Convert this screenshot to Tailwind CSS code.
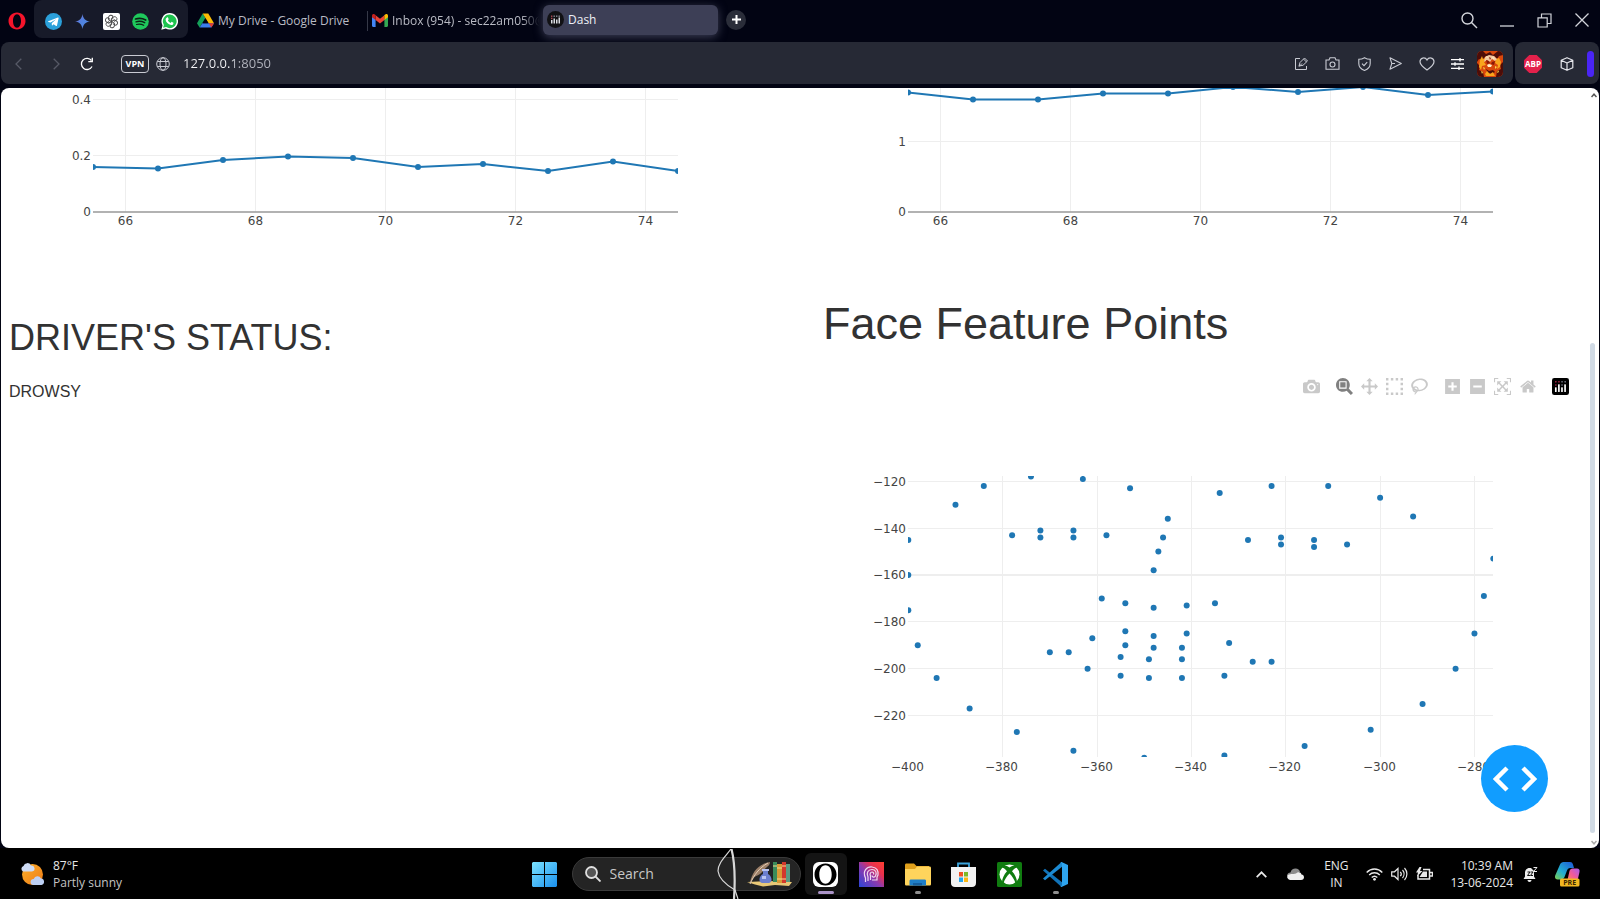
<!DOCTYPE html>
<html lang="en">
<head>
<meta charset="utf-8">
<meta name="viewport" content="width=device-width, initial-scale=1">
<title>Dash</title>
<script src="https://cdn.jsdelivr.net/npm/@tailwindcss/browser@4"></script>
</head>
<body class="min-h-screen flex flex-col bg-[#020413] text-white font-['Open_Sans','Noto_Sans',sans-serif] text-xs overflow-x-hidden">

<!-- Tab strip -->
<header class="flex items-center h-[42px] text-[#b9bbc4]">
  <button aria-label="Opera menu" class="w-[34px] flex justify-center shrink-0">
    <svg width="18" height="18" viewBox="0 0 18 18"><path fill="#f5142b" fill-rule="evenodd" d="M9 .5C4 .5.5 4.300.5 9S4 17.500 9 17.500 17.500 13.700 17.500 9 14 .5 9 .5zM9 2.300c2.500 0 4 3 4 6.700S11.500 15.700 9 15.700 5 12.700 5 9 6.500 2.300 9 2.300z"/></svg>
  </button>
  <nav aria-label="Pinned tabs" class="flex items-center justify-center gap-3 w-[154px] h-[38px] mb-1 rounded-lg bg-[#171a29] shrink-0">
    <a href="#" aria-label="Telegram"><svg width="17" height="17" viewBox="0 0 17 17" class="mt-1"><circle cx="8.500" cy="8.500" r="8.500" fill="#2ba0da"/><path fill="#fff" d="M3.300 8.300l9.600-3.700c.5-.2.8.1.7.7L12 12.600c-.1.500-.5.6-.9.4L8.600 11.200l-1.300 1.200c-.2.200-.4.200-.4-.1l-.2-2.100 4.400-4-5.500 3.400-2.300-.7c-.4-.2-.4-.5 0-.6z"/></svg></a>
    <a href="#" aria-label="Gemini"><svg width="17" height="17" viewBox="0 0 17 17" class="mt-1"><defs><linearGradient id="gem" x1="0" y1="0" x2="1" y2="1"><stop offset="0" stop-color="#7a6fd0"/><stop offset=".5" stop-color="#4f83e0"/><stop offset="1" stop-color="#5c8fe0"/></linearGradient></defs><path fill="url(#gem)" d="M8.500 1c.8 4.800 2.700 6.700 7.500 7.500-4.800.8-6.700 2.700-7.500 7.500-.8-4.800-2.700-6.700-7.500-7.500 4.800-.8 6.700-2.700 7.500-7.500z"/></svg></a>
    <a href="#" aria-label="ChatGPT"><svg width="17" height="17" viewBox="0 0 17 17" class="mt-1"><rect width="17" height="17" rx="2" fill="#fff"/><g fill="none" stroke="#444" stroke-width=".9"><path id="gk" d="M8.500 8.500V5.200l2.600-1.500c1.800-.3 3.300 1.300 2.800 3.100L11 8.500"/><use href="#gk" transform="rotate(60 8.500 8.500)"/><use href="#gk" transform="rotate(120 8.500 8.500)"/><use href="#gk" transform="rotate(180 8.500 8.500)"/><use href="#gk" transform="rotate(240 8.500 8.500)"/><use href="#gk" transform="rotate(300 8.500 8.500)"/></g></svg></a>
    <a href="#" aria-label="Spotify"><svg width="17" height="17" viewBox="0 0 17 17" class="mt-1"><circle cx="8.500" cy="8.500" r="8.300" fill="#1fc95c"/><g fill="none" stroke="#0c2415" stroke-linecap="round"><path stroke-width="1.700" d="M3.500 6c3.500-1 7.200-.6 10.200 1"/><path stroke-width="1.400" d="M4 8.800c3-.9 6.100-.5 8.700.9"/><path stroke-width="1.200" d="M4.500 11.500c2.500-.7 5-.4 7.200.8"/></g></svg></a>
    <a href="#" aria-label="WhatsApp"><svg width="17" height="17" viewBox="0 0 17 17" class="mt-1"><path fill="#fff" d="M8.700 0a8.300 8.300 0 0 0-7.200 12.400L.3 16.800l4.500-1.200A8.300 8.300 0 1 0 8.700 0z"/><path fill="#1fc34f" d="M8.700 1.500a6.800 6.800 0 0 0-5.800 10.400l-.8 2.900 3-.8A6.800 6.800 0 1 0 8.700 1.500z"/><path fill="#fff" d="M6 4.400c.4-.3.900-.2 1 .2l.7 1.600-.8 1.200c.6 1.200 1.500 2 2.700 2.500l1-1.100 1.800.9c.3 1.500-1 2.500-2.300 2.300-3-.5-5.300-2.900-5.500-5.300 0-1 .6-1.700 1.400-2.300z"/></svg></a>
  </nav>
  <a href="#" class="flex items-center gap-1 w-[179px] pl-[9px] mb-px shrink-0">
    <svg width="17" height="15" viewBox="0 0 17 15" class="shrink-0"><path fill="#15a05a" d="M5.700.5L0 10.200l2.600 4.300L8.500 4.800z"/><path fill="#fbbc05" d="M5.700.5h5.600L17 10.200h-5.300z"/><path fill="#3b7ded" d="M5.300 10.200H17l-2.600 4.300H2.600z"/><path fill="#e33b2e" d="M14.400 14.500l-2.700-4.300H17z"/><path fill="#020413" d="M8.500 5.400l2.700 4.800H5.800z"/></svg>
    <span class="whitespace-nowrap">My Drive - Google Drive</span>
  </a>
  <a href="#" class="flex items-center gap-1 w-[176px] h-5 pl-1 mb-px border-l border-[#363948] overflow-hidden shrink-0 mask-r-from-88% mask-r-to-98%">
    <svg width="16" height="13" viewBox="0 0 16 13" class="shrink-0"><path fill="#4285f4" d="M0 2.500l3.600 2.700V13H1.200C.5 13 0 12.500 0 11.800z"/><path fill="#34a853" d="M16 2.500l-3.600 2.700V13h2.400c.7 0 1.200-.5 1.200-1.200z"/><path fill="#ea4335" d="M3.600 1.300L8 4.700l4.400-3.400V6L8 9.400 3.600 6z"/><path fill="#c5221f" d="M0 1.800C0 .2 1.700-.5 3 .600l.6.6V6L0 3.300z"/><path fill="#fbbc04" d="M16 1.800C16 .2 14.300-.5 13 .600l-.6.6V6L16 3.300z"/></svg>
    <span class="whitespace-nowrap">Inbox (954) - sec22am050@</span>
  </a>
  <a href="#" class="flex items-center gap-1 w-[175px] h-[30px] mb-[3px] pl-1 rounded-md bg-[#3d3f56] shadow-[0_2px_10px_#3d3f56] text-[#eef0f6] shrink-0">
    <svg width="17" height="17" viewBox="0 0 17 17"><circle cx="8.500" cy="8.500" r="8.500" fill="#111114"/><g fill="#d9dbe0"><rect x="4" y="9" width="1.500" height="3.500"/><rect x="6.500" y="7.500" width="1.500" height="5"/><rect x="9" y="8.500" width="1.500" height="4"/><rect x="11.500" y="6.500" width="1.500" height="6"/></g><g fill="#b04a55"><rect x="4" y="4.500" width="1.400" height="1.400"/><rect x="4" y="6.700" width="1.400" height="1.400"/></g><g fill="#8a8d98"><rect x="6.500" y="4.500" width="1.400" height="1.400"/><rect x="9" y="4.500" width="1.400" height="1.400"/><rect x="11.500" y="4.500" width="1.400" height="1.400"/></g></svg>
    <span>Dash</span>
  </a>
  <button aria-label="New tab" class="ml-2 mb-[3px] size-5 rounded-full bg-[#2a2d39] flex items-center justify-center shrink-0"><svg width="9" height="9" viewBox="0 0 9 9"><path d="M4.500 0v9M0 4.500h9" stroke="#fff" stroke-width="2"/></svg></button>
  <div class="flex items-center ml-auto mb-[2px] text-[#d3d5db]">
    <button aria-label="Search tabs" class="w-[38px] flex justify-center"><svg width="17" height="17" viewBox="0 0 17 17" fill="none" stroke="currentColor" stroke-width="1.400"><circle cx="6.500" cy="6.500" r="5.500"/><path d="M10.500 10.500l5.500 5.500"/></svg></button>
    <button aria-label="Minimize" class="w-[38px] flex justify-center"><svg width="14" height="14" viewBox="0 0 14 14"><path d="M0 13h14" stroke="currentColor" stroke-width="1.300"/></svg></button>
    <button aria-label="Restore" class="w-[37px] flex justify-center"><svg width="15" height="15" viewBox="0 0 15 15" fill="none" stroke="currentColor" stroke-width="1.200"><path d="M4.500 4.500v-3.500h9.500v9.500h-3.500M1 4.800h9.200V14H1z"/></svg></button>
    <button aria-label="Close" class="w-[37px] flex justify-center"><svg width="14" height="14" viewBox="0 0 14 14"><path d="M.5.5l13 13M13.500.5l-13 13" stroke="currentColor" stroke-width="1.300"/></svg></button>
  </div>
</header>

<!-- Address bar -->
<div class="flex gap-[2px] h-[42px] mx-px mb-1 text-[#c9cbd3]">
  <div class="flex flex-1 items-center rounded-lg bg-[#262935] pt-px pr-[10px]">
    <button aria-label="Back" class="w-[35px] flex justify-center text-[#565966]"><svg width="7" height="12" viewBox="0 0 7 12" fill="none" stroke="currentColor" stroke-width="1.300"><path d="M6.300.7L1 6l5.300 5.300"/></svg></button>
    <button aria-label="Forward" class="w-[41px] flex justify-center text-[#565966]"><svg width="7" height="12" viewBox="0 0 7 12" fill="none" stroke="currentColor" stroke-width="1.300"><path d="M.7.7L6 6 .7 11.300"/></svg></button>
    <button aria-label="Reload" class="w-5 flex justify-center text-white"><svg width="14" height="14" viewBox="0 0 14 14" fill="none" stroke="currentColor" stroke-width="1.300"><path d="M12 9.500A5.600 5.600 0 1 1 11.500 3.500"/><path d="M8.300 4.700h4V.8" /></svg></button>
    <button class="ml-6 w-7 h-[18px] rounded border border-[#c9cbd3] text-[9px] leading-4 font-bold text-white flex items-center justify-center">VPN</button>
    <svg width="14" height="14" viewBox="0 0 14 14" fill="none" stroke="currentColor" class="ml-[7px]"><circle cx="7" cy="7" r="6.300"/><ellipse cx="7" cy="7" rx="3" ry="6.300"/><path d="M1.300 4.500h11.400M1.300 9.500h11.400"/></svg>
    <input aria-label="Address" value="127.0.0.1:8050" class="ml-[13px] flex-1 outline-none text-[13px] text-transparent bg-[linear-gradient(90deg,#f4f5f8_51px,#b4b6c0_51px)] bg-clip-text caret-white">
    <div class="flex items-center">
      <button aria-label="Edit" class="w-[31px] flex justify-center"><svg width="15" height="14" viewBox="0 0 15 14" fill="none" stroke="currentColor"><path d="M6 1.500H1.500v11h11V9"/><path d="M5 9l1-3.500L10.500 1l3 3L9 8.300zM8 6.500L5 9.500M9.500 2l3 3"/></svg></button>
      <button aria-label="Snapshot" class="w-[31px] flex justify-center"><svg width="15" height="13" viewBox="0 0 15 13" fill="none" stroke="currentColor" stroke-width="1.100"><path d="M1 3h3l1-2.300h5L11 3h3v9.300H1z"/><circle cx="7.500" cy="7.500" r="2.500"/></svg></button>
      <button aria-label="Ad blocker" class="w-8 flex justify-center"><svg width="13" height="14" viewBox="0 0 13 14" fill="none" stroke="currentColor" stroke-width="1.100"><path d="M6.500.7c2 1.200 3.700 1.600 5.700 1.600v4.200c0 3.500-2.500 5.800-5.700 6.900C3.300 12.300.8 10 .8 6.500V2.300c2 0 3.700-.4 5.700-1.600z"/><path d="M4 6.700l2 2 3.200-3.500"/></svg></button>
      <button aria-label="Send" class="w-[31px] flex justify-center"><svg width="13" height="13" viewBox="0 0 13 13" fill="none" stroke="currentColor" stroke-width="1.100"><path d="M1 .8l11.300 5.700L1 12.200l1.800-5.700zM2.800 6.500H6" stroke-linejoin="round"/></svg></button>
      <button aria-label="Bookmark" class="w-[31px] flex justify-center"><svg width="16" height="14" viewBox="0 0 16 14" fill="none" stroke="currentColor" stroke-width="1.200"><path d="M8 13C4.500 10.500 1 8 1 4.700 1 .8 6-.5 8 3c2-3.500 7-2.200 7 1.700C15 8 11.500 10.500 8 13z"/></svg></button>
      <button aria-label="Easy setup" class="w-[31px] flex justify-center text-white"><svg width="13" height="12" viewBox="0 0 13 12" fill="none" stroke="currentColor" stroke-width="1.300"><path d="M0 1.700h13M0 6h13M0 10.300h13M9 0v3.500M4 4.200v3.600M8 8.500V12"/></svg></button>
      <button aria-label="Profile" class="ml-1"><svg width="26" height="26" viewBox="0 0 26 26"><defs><clipPath id="av"><rect width="26" height="26" rx="5"/></clipPath></defs><g clip-path="url(#av)"><rect width="26" height="26" fill="#d9480c"/><path fill="#4d0d08" d="M0 0h6l3 3 4-2 3 3 5-4h5v4l-4 1-2 3-3-3-4 2-4-2-4 4-3-1-2 3zM0 12l3 3-1 4 4 2 1 5H0zM26 11l-3 3 1 4-4 2-1 6h7zM9 18l3 2 4-1 2 2-3 2-4-1z"/><path fill="#f9a51d" d="M3 9l2-4 1 3 3-1-2 4 2 3-4 1-1 4-2-3zM22 7l-3 1-1 4 3 2-1 4 3-2 1-5zM8 23l2-3 3 3 3-2 2 4H9z"/><path fill="#f3c9a0" d="M8 6l4-2 5 1 3 3-2 2-3-2-2 3-3-2-3 2z"/><path fill="#fff1c8" d="M9 5l2 1-1 1zM15 6l3 1-2 1zM10 14l2-1 3 1-1 2h-3z"/><path fill="#8a1909" d="M9 9l3 1 1 2-3 1zM18 10l-3 1-1 2 3 1zM12 6l2 1-1 2z"/><path fill="#ffd84a" d="M4 20l2 1-1 2zM21 19l1 2-2 1zM6 16l2 1-1 2zM18 15l2 1-2 2z"/></g></svg></button>
    </div>
  </div>
  <div class="flex items-center w-[84px] rounded-lg bg-[#262935] pt-px pl-[9px]">
    <button aria-label="AdBlock Plus"><svg width="18" height="18" viewBox="0 0 18 18"><path fill="#e3214b" d="M5.300 0h7.400L18 5.300v7.400L12.700 18H5.300L0 12.700V5.300z"/><text x="9" y="12" text-anchor="middle" font-size="8" font-weight="bold" fill="#fff" font-family="Open Sans">ABP</text></svg></button>
    <button aria-label="Extensions" class="ml-[18px] text-[#e6e7ec]"><svg width="14" height="14" viewBox="0 0 14 14" fill="none" stroke="currentColor" stroke-width="1.200" stroke-linejoin="round"><path d="M7 .7l5.800 2.600v7.400L7 13.300 1.200 10.700V3.300zM1.200 3.300L7 6l5.800-2.700M7 6v7.300"/></svg></button>
    <div class="ml-[13px] w-[7px] h-[26px] rounded-full bg-[#4a25f5]"></div>
  </div>
</div>

<!-- Page -->
<main class="flex flex-1 mx-px rounded-lg bg-white overflow-hidden font-['Liberation_Sans',Arial,sans-serif] text-[#323232]">
  <div class="flex-1 grid grid-cols-2 gap-x-16 content-start pl-[8px] pr-4">
    <section aria-label="Eye ratio chart"><svg id="c1" viewBox="9 88 750 152" class="w-full h-auto block" font-family="Verdana,'DejaVu Sans',sans-serif" font-size="12" fill="#444"></svg></section>
    <section aria-label="Mouth ratio chart"><svg id="c2" viewBox="823 88 750 152" class="w-full h-auto block" font-family="Verdana,'DejaVu Sans',sans-serif" font-size="12" fill="#444"></svg></section>
    <section class="pt-19">
      <h2 class="text-[36px] leading-[44px]">DRIVER'S STATUS:</h2>
      <p class="mt-5 text-base leading-6">DROWSY</p>
    </section>
    <section class="pt-[57px] relative">
      <h1 class="text-[45px] leading-[54px]">Face Feature Points</h1>
      <div role="toolbar" aria-label="Chart tools" class="flex justify-end mt-[23px] h-[25px] text-[#c9c9c9]">
        <button aria-label="Download plot as a png" class="w-[25px] flex items-center justify-center"><svg width="17" height="17" viewBox="0 0 1000 1000" fill="currentColor"><path transform="matrix(1 0 0 -1 0 850)" d="m500 450c-83 0-150-67-150-150 0-83 67-150 150-150 83 0 150 67 150 150 0 83-67 150-150 150z m400 150h-120c-16 0-34 13-39 29l-31 93c-6 15-23 28-40 28h-340c-16 0-34-13-39-28l-31-94c-6-15-23-28-40-28h-120c-55 0-100-45-100-100v-450c0-55 45-100 100-100h800c55 0 100 45 100 100v450c0 55-45 100-100 100z m-400-550c-138 0-250 112-250 250 0 138 112 250 250 250 138 0 250-112 250-250 0-138-112-250-250-250z m365 380c-19 0-35 16-35 35 0 19 16 35 35 35 19 0 35-16 35-35 0-19-16-35-35-35z"/></svg></button>
        <button aria-label="Zoom" class="ml-2 w-[25px] flex items-center justify-center text-[#808080]"><svg width="17" height="17" viewBox="0 0 1000 1000" fill="currentColor"><path transform="matrix(1 0 0 -1 0 850)" d="m1000-25l-250 251c40 63 63 138 63 218 0 224-182 406-407 406-224 0-406-182-406-406s183-406 407-406c80 0 155 22 218 62l250-250 125 125z m-812 250l0 438 437 0 0-438-437 0z m62 375l313 0 0-312-313 0 0 312z"/></svg></button>
        <button aria-label="Pan" class="w-[25px] flex items-center justify-center"><svg width="17" height="17" viewBox="0 0 1000 1000" fill="currentColor"><path transform="matrix(1 0 0 -1 0 850)" d="m1000 350l-187 188 0-125-250 0 0 250 125 0-188 187-187-187 125 0 0-250-250 0 0 125-188-188 186-187 0 125 252 0 0-250-125 0 187-188 188 188-125 0 0 250 250 0 0-126 187 188z"/></svg></button>
        <button aria-label="Box Select" class="w-[25px] flex items-center justify-center"><svg width="17" height="17" viewBox="0 0 1000 1000" fill="currentColor"><path transform="matrix(1 0 0 -1 0 850)" d="m0 850l0-143 143 0 0 143-143 0z m286 0l0-143 143 0 0 143-143 0z m285 0l0-143 143 0 0 143-143 0z m286 0l0-143 143 0 0 143-143 0z m-857-286l0-143 143 0 0 143-143 0z m857 0l0-143 143 0 0 143-143 0z m-857-285l0-143 143 0 0 143-143 0z m857 0l0-143 143 0 0 143-143 0z m-857-286l0-143 143 0 0 143-143 0z m286 0l0-143 143 0 0 143-143 0z m285 0l0-143 143 0 0 143-143 0z m286 0l0-143 143 0 0 143-143 0z"/></svg></button>
        <button aria-label="Lasso Select" class="w-[25px] flex items-center justify-center"><svg width="17" height="17" viewBox="0 0 1031 1000" fill="currentColor"><path transform="matrix(1 0 0 -1 0 850)" d="m1018 538c-36 207-290 336-568 286-277-48-473-256-436-463 10-57 36-108 76-151-13-66 11-137 68-183 34-28 75-41 114-42l-55-70 0 0c-2-1-3-2-4-3-10-14-8-34 5-45 14-11 34-8 45 4 1 1 2 3 2 5l0 0 113 140c16 11 31 24 45 40 4 3 6 7 8 11 48-3 100 0 151 9 278 48 473 255 436 462z m-624-379c-80 14-149 48-197 96 42 42 109 47 156 9 33-26 47-66 41-105z m-187-74c-19 16-33 37-39 60 50-32 109-55 174-68-42-25-95-24-135 8z m360 75c-34-7-69-9-102-8 8 62-16 128-68 170-73 59-175 54-244-5-9 20-16 40-20 61-28 159 121 317 333 354s407-60 434-217c28-159-121-318-333-355z"/></svg></button>
        <button aria-label="Zoom in" class="ml-2 w-[25px] flex items-center justify-center"><svg width="15" height="17" viewBox="0 0 875 1000" fill="currentColor"><path transform="matrix(1 0 0 -1 0 850)" d="m1 787l0-875 875 0 0 875-875 0z m687-500l-187 0 0-187-125 0 0 187-188 0 0 125 188 0 0 187 125 0 0-187 187 0 0-125z"/></svg></button>
        <button aria-label="Zoom out" class="w-[25px] flex items-center justify-center"><svg width="15" height="17" viewBox="0 0 875 1000" fill="currentColor"><path transform="matrix(1 0 0 -1 0 850)" d="m0 788l0-876 875 0 0 876-875 0z m688-500l-500 0 0 125 500 0 0-125z"/></svg></button>
        <button aria-label="Autoscale" class="w-[25px] flex items-center justify-center"><svg width="17" height="17" viewBox="0 0 1000 1000" fill="currentColor"><path transform="matrix(1 0 0 -1 0 850)" d="m250 850l-187 0-63 0 0-62 0-188 63 0 0 188 187 0 0 62z m688 0l-188 0 0-62 188 0 0-188 62 0 0 188 0 62-62 0z m-875-938l0 188-63 0 0-188 0-62 63 0 187 0 0 62-187 0z m875 188l0-188-188 0 0-62 188 0 62 0 0 62 0 188-62 0z m-125 188l-1 0-93-94-156 156 156 156 92-93 2 0 0 250-250 0 0-2 93-92-156-156-156 156 94 92 0 2-250 0 0-250 0 0 93 93 157-156-157-156-93 94 0 0 0-250 250 0 0 0-94 93 156 157 156-157-93-93 0 0 250 0 0 250z"/></svg></button>
        <button aria-label="Reset axes" class="w-[25px] flex items-center justify-center"><svg width="16" height="17" viewBox="0 0 929 1000" fill="currentColor"><path transform="matrix(1 0 0 -1 0 850)" d="m786 296v-267q0-15-11-26t-25-10h-214v214h-143v-214h-214q-15 0-25 10t-11 26v267q0 1 0 2t0 2l321 264 321-264q1-1 1-4z m124 39l-34-41q-5-5-12-6h-2q-7 0-12 3l-386 322-386-322q-7-4-13-4-7 2-12 7l-35 41q-4 5-3 13t6 12l401 334q18 15 42 15t43-15l136-114v109q0 8 5 13t13 5h107q8 0 13-5t5-13v-227l122-102q5-5 6-12t-4-13z"/></svg></button>
        <a href="#" aria-label="Produced with Plotly" class="ml-2 w-[25px] flex items-center justify-center"><svg width="17" height="17" viewBox="0 0 132 132"><rect width="132" height="132" rx="18"/><g fill="#c52b54"><circle cx="30" cy="30" r="6"/><circle cx="54" cy="30" r="6"/><circle cx="30" cy="54" r="6"/></g><g fill="#8b8fa0"><circle cx="78" cy="30" r="6"/><circle cx="102" cy="30" r="6"/><circle cx="78" cy="54" r="6"/></g><g fill="#fff"><rect x="23" y="72" width="13" height="36" rx="4"/><rect x="47" y="48" width="13" height="60" rx="4"/><rect x="71" y="72" width="13" height="36" rx="4"/><rect x="95" y="48" width="13" height="60" rx="4"/></g></svg></a>
      </div>
      <svg id="c3" viewBox="823 399 750 400" class="w-full h-auto block" font-family="Verdana,'DejaVu Sans',sans-serif" font-size="12" fill="#444"></svg>
      <button aria-label="Dash developer tools" class="absolute right-[25px] bottom-[-13px] size-[67px] rounded-full bg-[#119dff] flex items-center justify-center"><svg width="44" height="26" viewBox="0 0 44 26" fill="none" stroke="#fff" stroke-width="4.500"><path d="M14 2L3 13l11 11M30 2l11 11-11 11"/></svg></button>
    </section>
  </div>
  <div aria-hidden="true" class="w-[10px] flex flex-col items-center text-[#555]">
    <svg width="6" height="5" viewBox="0 0 6 5" class="mt-[5px]" fill="none" stroke="currentColor" stroke-width="1.500"><path d="M.5 4L3 1.200 5.500 4"/></svg>
    <div class="mt-auto w-[5px] h-[490px] mr-1 rounded-full bg-[#d0dae5]"></div>
    <svg width="6" height="5" viewBox="0 0 6 5" class="mt-[7px] mb-[3px]" fill="none" stroke="#aaa" stroke-width="1.500"><path d="M.5 1L3 3.800 5.500 1"/></svg>
  </div>
</main>

<!-- Taskbar -->
<footer class="relative grid grid-cols-[1fr_auto_1fr] items-center h-[51px] pt-px bg-black text-[#e8e8e8]">
  <a href="#" class="flex items-center pl-5 gap-2">
    <svg width="25" height="24" viewBox="0 0 25 24"><defs><linearGradient id="sun" x1="0" y1="0" x2="1" y2="1"><stop offset="0" stop-color="#fbb02c"/><stop offset="1" stop-color="#ee7a15"/></linearGradient></defs><circle cx="12.500" cy="12.500" r="10.500" fill="url(#sun)"/><path fill="#cfdcf5" d="M3 9.500a3 3 0 0 1 .5-5.500A4 4 0 0 1 11 3.500a3 3 0 0 1 1 6z"/><path fill="#bdd0f4" d="M13.500 23a3 3 0 0 1 .2-6 4 4 0 0 1 7.300-.500 3.300 3.300 0 0 1 .5 6.500z"/></svg>
    <span class="flex flex-col leading-[17px]"><span>87°F</span><span class="text-[#c4c4c4]">Partly sunny</span></span>
  </a>
  <div class="flex items-center">
    <button aria-label="Start" class="w-[42px] flex justify-center"><svg width="25" height="25" viewBox="0 0 25 25"><defs><linearGradient id="win" x1="0" y1="0" x2="1" y2="1"><stop offset="0" stop-color="#7be3ff"/><stop offset="1" stop-color="#1a90ee"/></linearGradient></defs><path fill="url(#win)" d="M1 0h11v12H0V1zM13 0h11l1 1v11H13zM0 13h12v12H1l-1-1zM13 13h12v11l-1 1H13z"/></svg></button>
    <label class="ml-[6px] flex items-center w-[229px] h-[34px] rounded-full border border-[#3a3a3a] bg-[#242424] pl-3 pr-[6px]">
      <svg width="16" height="16" viewBox="0 0 16 16" fill="#555" stroke="#e0e0e0" stroke-width="1.800"><circle cx="6.500" cy="6.500" r="5.500"/><path d="M10.500 10.500l5 5"/></svg>
      <input type="search" aria-label="Search" placeholder="Search" class="ml-[9px] w-20 flex-1 outline-none text-sm placeholder:text-[#c8c8c8]">
      <svg width="48" height="26" viewBox="0 0 48 26"><path fill="#e9c877" d="M1 21l22-1 23 1-3 4-14-1-12 1.500-8-2z"/><path fill="#9c7f68" d="M4 22C6 11 12 3 24 1c0 4-4 5-5 7-3 4-6 6-9 7-3 2-4 4-5 7z"/><path d="M4 23C8 14 13 7 22 2" stroke="#e3cdb5" stroke-width="1" fill="none"/><path fill="#6c7fd0" d="M17 9h5v4c4 2 5 8 1 9h-7c-4-1-3-7 1-9z"/><path fill="#b9c4f2" d="M16 8h7v2h-7zM16 15h4v3h-4z"/><rect x="27" y="1" width="4" height="20" fill="#3b8c5a"/><rect x="31" y="3" width="5" height="19" fill="#d99a35"/><rect x="36" y="1" width="4" height="21" fill="#d3392c"/><rect x="40" y="3" width="4" height="18" fill="#5a9c82"/><path stroke="#f3dc94" d="M31 7h5M31 18h5M36 5h4M36 18h4M27 5h4"/></svg>
    </label>
    <button aria-label="Opera" class="ml-1 w-[42px] h-[42px] rounded-md bg-[#141414] flex flex-col items-center justify-end gap-1 pb-px"><svg width="25" height="25" viewBox="0 0 25 25"><rect width="25" height="25" rx="6" fill="#fff"/><path fill-rule="evenodd" d="M12.500 1.500C6 1.500 1.500 6.500 1.500 12.500s4.500 11 11 11 11-5 11-11-4.500-11-11-11zm0 1.800c4 0 6.200 4.200 6.200 9.200s-2.200 9.200-6.200 9.200-6.200-4.200-6.200-9.200 2.200-9.200 6.200-9.200z"/></svg><span class="w-4 h-[3px] rounded-full bg-[#ab94c8]"></span></button>
    <button aria-label="Assistant" class="ml-1 w-[42px] h-[42px] flex flex-col items-center justify-end pb-2"><svg width="25" height="25" viewBox="0 0 25 25"><defs><linearGradient id="ast" x1="0" y1="1" x2="1" y2="0"><stop offset="0" stop-color="#2a45d8"/><stop offset=".45" stop-color="#8b3aae"/><stop offset=".7" stop-color="#e8304f"/><stop offset="1" stop-color="#ff4030"/></linearGradient></defs><rect width="25" height="25" fill="url(#ast)"/><g fill="none" stroke="#f0d8f0" stroke-width="1.200"><path d="M6.500 20v-4C3 9 8 4.500 13 5c5 .5 6.500 4 6 8l-1 2v3h-5"/><path d="M9 19v-4c-2-4 0-7.500 4-7.500s5 3.500 3.500 6.500c-1 2-3.500 1-3.500-.5"/><path d="M11.500 18v-4c-1-2 0-4 1.500-4s2 1 1.500 2.500"/></g></svg></button>
    <button aria-label="File Explorer" class="ml-1 w-[42px] h-[42px] flex flex-col items-center justify-end gap-1 pb-px"><svg width="26" height="25" viewBox="0 0 26 25"><path fill="#e0a01c" d="M0 3c0-.8.500-1.500 1.500-1.500H9L11.500 4H24v6H0z"/><path fill="#ffd45c" d="M0 7h10l2-2.500h12.500c1 0 1.500.6 1.500 1.500v16c0 1-.6 1.500-1.500 1.500h-23C.6 23.500 0 23 0 22z"/><path fill="#1f7fc8" d="M4.500 23.500V19c0-1 .5-1.500 1.500-1.500h13.500c1 0 1.500.5 1.500 1.500v4.500z"/><path fill="#155f9f" d="M8 21h9v2.500H8z"/></svg><span class="w-[6px] h-[3px] rounded-full bg-[#8f8f8f]"></span></button>
    <button aria-label="Microsoft Store" class="ml-1 w-[42px] h-[42px] flex flex-col items-center justify-end pb-2"><svg width="25" height="25" viewBox="0 0 25 25"><path d="M7 6V1.500h11V6" fill="none" stroke="#3ba3dc" stroke-width="1.800"/><path fill="#f2f2f2" d="M0 5h25v16c0 2.500-1.500 4-4 4H4c-2.500 0-4-1.500-4-4z"/><path fill="#f05024" d="M8 10h4v4.500H8z"/><path fill="#7db928" d="M13 10h4v4.500h-4z"/><path fill="#22a5ee" d="M8 15.500h4V20H8z"/><path fill="#fcb813" d="M13 15.500h4V20h-4z"/></svg></button>
    <button aria-label="Xbox" class="ml-1 w-[42px] h-[42px] flex flex-col items-center justify-end pb-2"><svg width="25" height="25" viewBox="0 0 25 25"><rect width="25" height="25" rx="1.500" fill="#107c10"/><circle cx="12.500" cy="12.500" r="10" fill="#fff"/><path fill="#107c10" d="M12.500 5.500C10 3.500 7 2.800 5.500 4L4.300 5.600c2 0 4 1.600 5.700 3.700-3 3.300-5 7.500-5 11l1.500 1C7.500 17.500 10 14 12.500 11.500c2.500 2.500 5 6 6 9.800l1.500-1c0-3.500-2-7.700-5-11 1.700-2.100 3.700-3.700 5.700-3.700L19.500 4c-1.500-1.200-4.500-.5-7 1.500z"/></svg></button>
    <button aria-label="Visual Studio Code" class="ml-1 w-[42px] h-[42px] flex flex-col items-center justify-end gap-1 pb-px"><svg width="25" height="25" viewBox="0 0 25 25"><path fill="#1173b8" d="M0 8.500l2-1.800 17 13.500V25L18 24.500z"/><path fill="#1c8ad2" d="M0 16.500l2 1.800L19 4.800V0l-1 .5z"/><path fill="#2ea4ee" d="M18.500 0L25 3v19l-6.500 3-1.500-1c1 .5 2-.3 2-1.500v-20C19 1.300 18 .5 17 1z"/></svg><span class="w-[6px] h-[3px] rounded-full bg-[#8f8f8f]"></span></button>
  </div>
  <div class="flex items-center justify-end pr-5">
    <button aria-label="Show hidden icons"><svg width="11" height="7" viewBox="0 0 11 7" fill="none" stroke="currentColor" stroke-width="1.700"><path d="M.7 6.200L5.500 1.300l4.800 4.900"/></svg></button>
    <button aria-label="OneDrive" class="ml-5"><svg width="17" height="12" viewBox="0 0 17 12"><path fill="#8d8d8d" d="M0 8C0 5.500 2 4.500 3.500 4.500 4 1.800 6 .5 8.500.5S12.500 2 13 4l-7 5z"/><path fill="#f0f0f0" d="M3 12a3 3 0 0 1-2-5c3-2 6-.5 8-1.500 2-2 5-1.500 5.500 1 1.500 0 2.500 1.300 2.500 2.700S16 12 14 12z"/></svg></button>
    <button class="ml-4 w-8 leading-[17px] text-center">ENG<br>IN</button>
    <button aria-label="Network, volume, battery" class="ml-[14px] flex items-center gap-2">
      <svg width="17" height="13" viewBox="0 0 17 13" fill="none" stroke="currentColor" stroke-width="1.400"><path d="M.7 4.500c4.500-4.600 11.100-4.600 15.600 0M3.200 7c3-3 7.600-3 10.600 0M5.700 9.500c1.600-1.500 4-1.500 5.600 0"/><circle cx="8.500" cy="11.300" r="1.400" fill="currentColor" stroke="none"/></svg>
      <svg width="17" height="14" viewBox="0 0 17 14" fill="none" stroke="currentColor" stroke-width="1.200"><path d="M.7 4.800h2.800L7 1.500v11L3.500 9.200H.7zM9.300 4.800c1.200 1.300 1.200 3.100 0 4.400M11.500 3c2 2.300 2 5.700 0 8M13.500 1c3.200 3.500 3.200 8.500 0 12"/></svg>
      <svg width="17" height="14" viewBox="0 0 17 14" fill="none" stroke="currentColor" stroke-width="1.500"><path d="M7 2.500h6.500v9.500H2V8M14 5.500h2.500v3.500H14"/><path fill="currentColor" stroke="none" d="M3.500 0L0 5.500h2L1 9.500 6.500 4H4L5.500 0zM7 4.500h4V10H3.500z"/></svg>
    </button>
    <button class="ml-[17px] leading-[17px] text-right whitespace-nowrap">10:39 AM<br>13-06-2024</button>
    <button aria-label="Notifications" class="ml-[10px]"><svg width="15" height="17" viewBox="0 0 15 17"><path fill="#eee" d="M6.500 2C3.500 2 2 4.500 2 7v3.500L.5 13h12L11 10.500V5L8 2zM4.500 14h4c0 2.500-4 2.500-4 0z"/><path fill="none" stroke="#111" d="M4.500 6h2.500L4.500 9.500H7M7.500 6H10L7.500 9.500H10"/><path fill="none" stroke="#eee" d="M10.500 1.500h3.500L10.500 5.500H14"/></svg></button>
    <a href="#" aria-label="Copilot" class="ml-[17px]"><svg width="25" height="25" viewBox="0 0 25 25"><defs><linearGradient id="cpa" x1="0" y1="1" x2="1" y2="0"><stop offset="0" stop-color="#7fd04a"/><stop offset=".4" stop-color="#22aed0"/><stop offset="1" stop-color="#1d55d8"/></linearGradient><linearGradient id="cpb" x1="0" y1="1" x2="1" y2="0"><stop offset="0" stop-color="#ff8a4a"/><stop offset=".5" stop-color="#f05a9a"/><stop offset="1" stop-color="#a65cf0"/></linearGradient></defs><path fill="url(#cpa)" d="M5 2.500C5.500 1 7 0 8.500 0H15c1.500 0 2.500.8 3 2.500L19 6h-4c-1.500 0-2.500 1-3 2.500L9.500 15c-.5 1.500-2 2.500-3.500 2.500H2.500c-2 0-3-1.700-2.300-4z"/><path fill="url(#cpb)" d="M14.500 9c.5-1.500 1.500-2.500 3-2.500H22c2 0 3 1.500 2.500 3.500L23 16.500 20 20h-8z"/><rect x="5" y="16.500" width="19.500" height="8" rx="1.500" fill="#f3b721"/><text x="14.700" y="23.200" text-anchor="middle" font-size="7" font-weight="bold" fill="#3a2600" font-family="Open Sans">PRE</text></svg></a>
  </div>
  <svg aria-hidden="true" width="24" height="50" viewBox="0 0 24 50" class="absolute left-1/2 -ml-[84px] top-px pointer-events-none" fill="none" stroke="#d8d8d8"><path stroke-width="1.200" d="M15 0C9 8 2 14 2 22c1 9 10 15 17 19l3 9"/><path stroke-width="2.200" d="M15.500 0c3 12 4 28 2.500 50"/></svg>
</footer>

<script>
const clip = (id, x, y, w, h) => `<clipPath id="${id}"><rect x="${x}" y="${y}" width="${w}" height="${h}"/></clipPath>`;
const line = (x1, y1, x2, y2, c = '#eee', w = 1) => `<path d="M${x1} ${y1}L${x2} ${y2}" stroke="${c}" stroke-width="${w}"/>`;
const dot = (x, y) => `<circle cx="${x}" cy="${y}" r="3" fill="#1f77b4"/>`;
const label = (x, y, t, a = 'middle') => `<text x="${x}" y="${y}" text-anchor="${a}">${t}</text>`;

// Time series: left is the x of sample 65.5; one sample step is 65 px
function series(id, left, ticks, ys) {
  const right = left + 585;
  let s = clip(id + 'p', left, 88, 585, 125);
  [66, 68, 70, 72, 74].forEach((v, i) => {
    const x = Math.floor(left + 32 + i * 130.200) + .5;
    s += line(x, 88, x, 212) + label(x, 225, v);
  });
  ticks.forEach(([y, t]) => { s += line(left, y, right, y, t === '0' ? '#999' : '#eee', t === '0' ? 1.500 : 1) + label(left - 2, y + 4, t, 'end'); });
  const pts = ys.map((y, i) => [left + i * 65, y]);
  s += `<g clip-path="url(#${id}p)"><polyline fill="none" stroke="#1f77b4" stroke-width="2" points="${pts.join(' ')}"/>${pts.map(p => dot(...p)).join('')}</g>`;
  document.getElementById(id).innerHTML = s;
}
series('c1', 93, [[99.5, '0.4'], [155.5, '0.2'], [212, '0']], [167, 168.5, 160, 156.500, 158, 167, 164, 171, 161.500, 171]);
series('c2', 908, [[141.5, '1'], [212, '0']], [92.500, 99.500, 99.500, 93.500, 93.500, 87, 92, 87, 95, 91.500]);

// Face landmarks in data coordinates
const face = [[-374,-118],[-363,-119],[-384,-122],[-390,-130],[-353,-123],[-334,-125],[-345,-136],[-400,-145],[-378,-143],[-372,-141],[-372,-144],[-365,-141],[-365,-144],[-358,-143],[-346,-144],[-347,-150],[-348,-158],[-400,-160],[-400,-175],[-359,-170],[-354,-172],[-348,-174],[-341,-173],[-335,-172],[-361,-187],[-354,-184],[-354,-190],[-348,-186],[-348,-191],[-341,-185],[-342,-191],[-398,-190],[-370,-193],[-366,-193],[-355,-195],[-349,-196],[-342,-196],[-362,-200],[-355,-203],[-349,-204],[-342,-204],[-333,-203],[-332,-189],[-394,-204],[-387,-217],[-377,-227],[-365,-235],[-350,-238],[-333,-237],[-323,-122],[-311,-122],[-300,-127],[-293,-135],[-328,-145],[-321,-144],[-321,-147],[-314,-145],[-314,-148],[-307,-147],[-276,-153],[-278,-169],[-280,-185],[-327,-197],[-323,-197],[-284,-200],[-291,-215],[-302,-226],[-316,-233]];
const fx = v => 908.300 + (v + 400) * 4.718, fy = v => 481.300 - (v + 120) * 2.343;
let s = clip('fp', 908, 476, 585, 281);
for (let v = -400; v <= -280; v += 20) {
  const x = Math.floor(fx(v)) + .5;
  if (v > -400) s += line(x, 476, x, 757);
  s += label(x - 1, 771, '−' + -v);
}
for (let v = -120; v >= -220; v -= 20) {
  const y = v === -160 ? 575 : Math.floor(fy(v)) + .5;
  s += line(908, y, 1493, y, '#eee', v === -160 ? 2 : 1) + label(906, y + 4, '−' + -v, 'end');
}
s += `<g clip-path="url(#fp)">${face.map(([x, y]) => dot(fx(x), fy(y))).join('')}</g>`;
document.getElementById('c3').innerHTML = s;
</script>
</body>
</html>
